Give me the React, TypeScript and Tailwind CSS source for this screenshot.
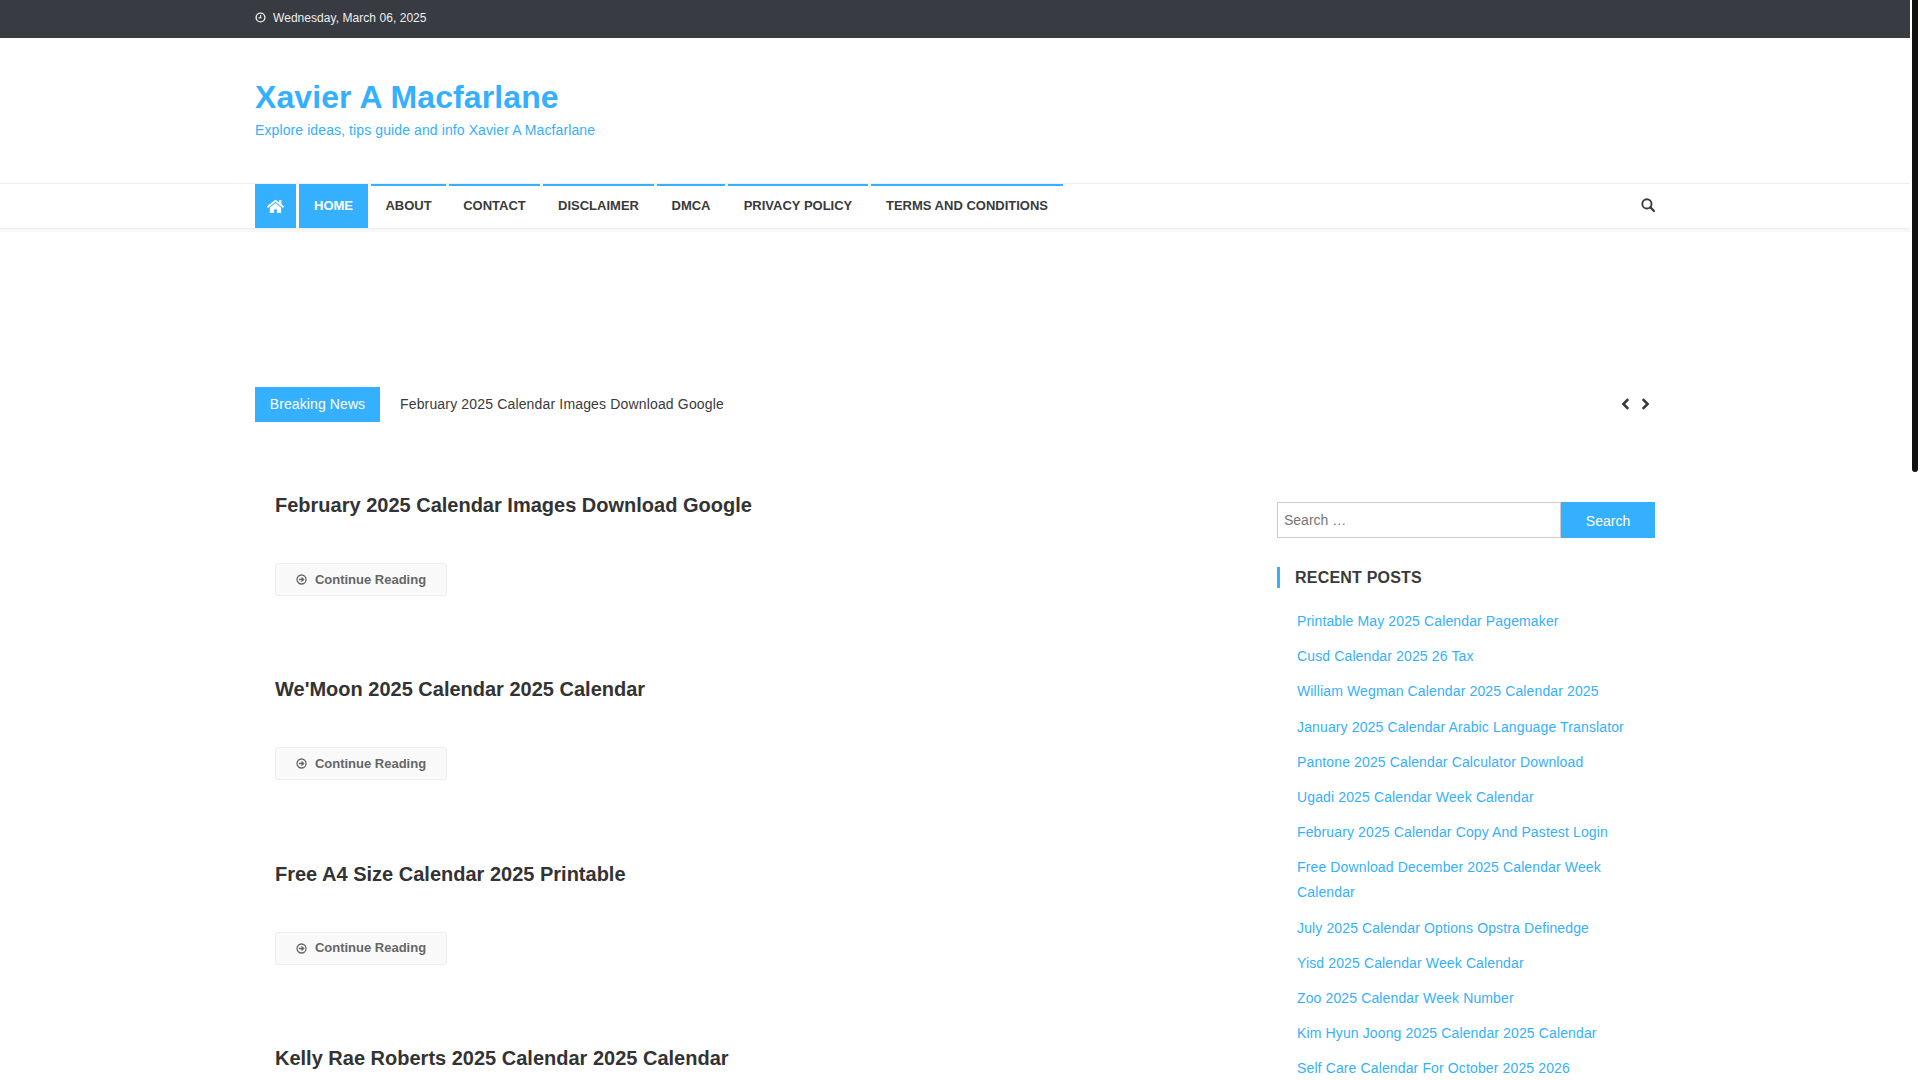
import React from "react";
import { FaHome } from "react-icons/fa";

const nav: [string, string][] = [
  ["ABOUT", "w-[75px]"],
  ["CONTACT", "w-[91px]"],
  ["DISCLAIMER", "w-[111px]"],
  ["DMCA", "w-[68px]"],
  ["PRIVACY POLICY", "w-[140px]"],
  ["TERMS AND CONDITIONS", "w-[192px]"],
];
const posts = [
  "February 2025 Calendar Images Download Google",
  "We'Moon 2025 Calendar 2025 Calendar",
  "Free A4 Size Calendar 2025 Printable",
  "Kelly Rae Roberts 2025 Calendar 2025 Calendar",
];
const recent = [
  "Printable May 2025 Calendar Pagemaker",
  "Cusd Calendar 2025 26 Tax",
  "William Wegman Calendar 2025 Calendar 2025",
  "January 2025 Calendar Arabic Language Translator",
  "Pantone 2025 Calendar Calculator Download",
  "Ugadi 2025 Calendar Week Calendar",
  "February 2025 Calendar Copy And Pastest Login",
  "Free Download December 2025 Calendar Week Calendar",
  "July 2025 Calendar Options Opstra Definedge",
  "Yisd 2025 Calendar Week Calendar",
  "Zoo 2025 Calendar Week Number",
  "Kim Hyun Joong 2025 Calendar 2025 Calendar",
  "Self Care Calendar For October 2025 2026",
];

function ClockIcon() {
  return (
    <svg viewBox="0 0 12 12" className="h-[11px] w-[11px]" fill="none" stroke="currentColor">
      <circle cx="6" cy="6" r="4.8" strokeWidth="1.5" />
      <path d="M6.2 3.2V6.4H3.8" strokeWidth="1.2" />
    </svg>
  );
}

function ArrowCircleIcon() {
  return (
    <svg viewBox="0 0 12 12" className="h-[11px] w-[11px]" fill="none" stroke="currentColor">
      <circle cx="6" cy="6" r="4.9" strokeWidth="1.4" />
      <path d="M3.2 6H8M6 3.8L8.3 6L6 8.2" strokeWidth="1.4" />
    </svg>
  );
}

function SearchIcon() {
  return (
    <svg viewBox="0 0 14 14" className="h-[14px] w-[14px]" fill="none" stroke="currentColor">
      <circle cx="5.9" cy="5.9" r="4.6" strokeWidth="1.9" />
      <path d="M9.4 9.4L13 13" strokeWidth="2.2" strokeLinecap="round" />
    </svg>
  );
}

function Chevron({ dir }: { dir: "left" | "right" }) {
  return (
    <svg viewBox="0 0 9 12" className="h-[12px] w-[9px]" fill="none" stroke="currentColor" strokeWidth="2.6">
      <path d={dir === "left" ? "M7.2 1.2L2.4 6L7.2 10.8" : "M1.8 1.2L6.6 6L1.8 10.8"} />
    </svg>
  );
}

export default function App() {
  return (
    <div className="relative h-[1080px] w-[1920px] overflow-hidden bg-white font-['Liberation_Sans',Arial,sans-serif] text-[14px] text-[#3a3a3a]">
      <div className="w-[1910px]">
        <div className="h-[38px] bg-[#383b42]">
          <div className="mx-auto flex h-full w-[1400px] items-center gap-[7px] pb-[3px] text-[12px] text-[#eee]">
            <ClockIcon />
            <span className="tracking-[0.05px]">Wednesday, March 06, 2025</span>
          </div>
        </div>
        <div className="mx-auto h-[145px] w-[1400px] pt-[38px]">
          <div className="text-[32px] font-bold leading-[43px] tracking-[0.1px] text-[#35b0ff]">Xavier A Macfarlane</div>
          <div className="text-[14px] leading-[22px] tracking-[0.1px] text-[#35b0ff]">Explore ideas, tips guide and info Xavier A Macfarlane</div>
        </div>
        <div className="h-[46px] border-y border-[#eee]">
          <div className="mx-auto flex h-full w-[1400px] items-stretch justify-between">
            <div className="flex gap-[3px]">
              <div className="flex w-[41px] items-center justify-center bg-[#35b0ff] text-white">
                <FaHome className="h-[17px] w-[17px]" />
              </div>
              <div className="flex w-[69px] items-center justify-center bg-[#35b0ff] text-[13px] font-bold text-white">HOME</div>
              {nav.map(([n, w]) => (
                <div key={n} className={`flex items-center justify-center whitespace-nowrap border-t-2 border-[#35b0ff] pb-[2px] text-[13px] font-bold text-[#3a3a3a] ${w}`}>
                  {n}
                </div>
              ))}
            </div>
            <div className="flex items-center pb-[3px] text-[#3a3a3a]">
              <SearchIcon />
            </div>
          </div>
        </div>
        <div className="h-[3px] bg-[#f7f7f7]" />
        <div className="mx-auto w-[1400px] pt-[155px]">
          <div className="flex h-[35px] items-center">
            <div className="flex h-full w-[125px] items-center justify-center bg-[#35b0ff] tracking-[0.1px] text-white">Breaking News</div>
            <div className="ml-[20px] flex-1 tracking-[0.16px] text-[#3a3a3a]">February 2025 Calendar Images Download Google</div>
            <div className="mb-[2px] mr-[5px] flex gap-[11px] text-[#3a3a3a]">
              <Chevron dir="left" />
              <Chevron dir="right" />
            </div>
          </div>
          <div className="flex">
            <div className="w-[1022px] pt-[70px]">
              {posts.map((p) => (
                <div key={p} className="h-[184.3px] pl-[20px]">
                  <h2 className="text-[20px] font-bold leading-[26px] text-[#333]">{p}</h2>
                  <div className="mt-[45px] flex h-[33px] w-[172px] items-center justify-center gap-[8px] rounded-[2px] border border-[#eee] bg-[#f9f9f9] text-[13px] font-bold text-[#666]">
                    <ArrowCircleIcon />
                    Continue Reading
                  </div>
                </div>
              ))}
            </div>
            <div className="w-[378px] pt-[80px]">
              <div className="flex h-[36px]">
                <div className="flex w-[284px] items-center border border-[#ccc] pl-[6px] text-[14px] text-[#757575]">Search …</div>
                <div className="flex w-[94px] items-center justify-center bg-[#35b0ff] pt-[3px] text-[14px] text-white">Search</div>
              </div>
              <div className="mt-[29px] flex h-[21px] items-center border-l-[3px] border-[#35b0ff] pl-[15px] text-[16px] font-bold tracking-[0.2px] text-[#3a3a3a]">RECENT POSTS</div>
              <ul className="mt-[16px] pl-[20px] pr-[30px]">
                {recent.map((r) => (
                  <li key={r} className="py-[5.1px] text-[14px] leading-[25px] tracking-[0.13px] text-[#35b0ff]">{r}</li>
                ))}
              </ul>
            </div>
          </div>
        </div>
      </div>
      <div className="absolute right-[2px] top-0 h-[472px] w-[6px] rounded-b-[3px] bg-[#111]" />
    </div>
  );
}
